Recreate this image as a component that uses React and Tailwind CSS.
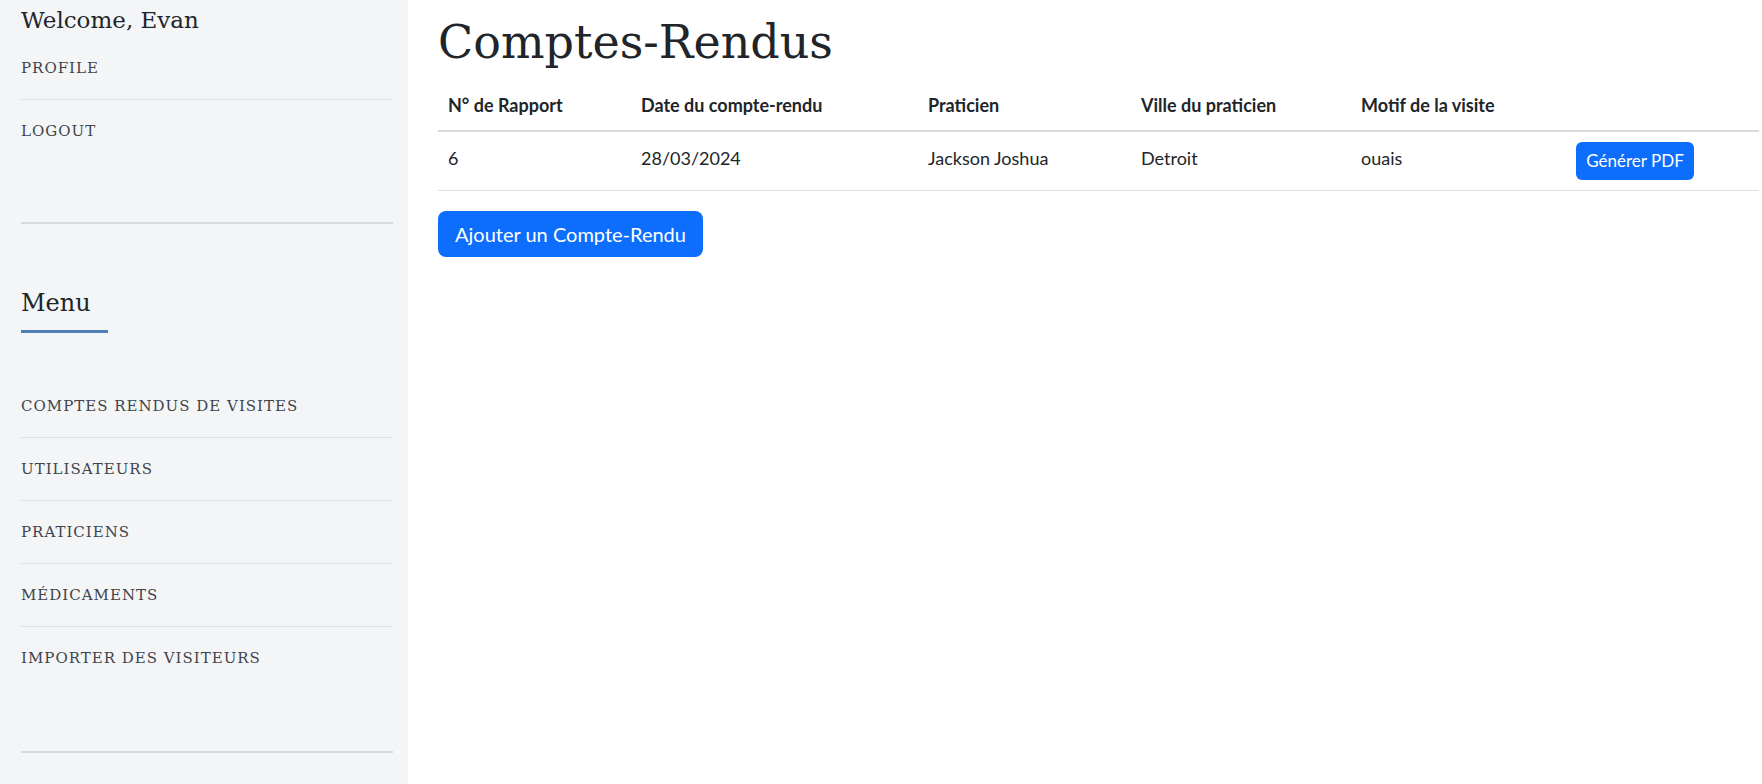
const sansFont = { fontFamily: 'Lato, "Open Sans", sans-serif' };

const topLinks = ['PROFILE'];

const menuLinks = [
  'COMPTES RENDUS DE VISITES',
  'UTILISATEURS',
  'PRATICIENS',
  'MÉDICAMENTS',
];

const rapports = [
  { id: 6, date: '28/03/2024', praticien: 'Jackson Joshua', ville: 'Detroit', motif: 'ouais' },
];

function SideLink({ label, last }) {
  return (
    <a
      href="#"
      className={`block py-[19px] text-[15px] leading-[24px] tracking-[1px] text-[#3f444b] ${last ? '' : 'border-b border-[#dfe0e3]'}`}
    >
      {label}
    </a>
  );
}

export default function App() {
  return (
    <div className="flex h-screen w-full overflow-hidden bg-white">
      {/* Sidebar */}
      <aside className="w-[408px] shrink-0 bg-[#f4f5f7] pl-[21px] pr-[15px] font-['DejaVu_Serif',serif]">
        <h2 className="pt-[6px] text-[23px] leading-[29px] text-[#212529]">Welcome, Evan</h2>
        <nav className="mt-[2px]">
          {topLinks.map((l) => (
            <SideLink key={l} label={l} />
          ))}
          <SideLink label="LOGOUT" last />
        </nav>
        <div className="mt-[60px] h-[2px] bg-[#d9dadd]" />

        <h3 className="mt-[65px] text-[24px] leading-[29px] text-[#212529]">Menu</h3>
        <div className="mt-[12px] h-[3px] w-[87px] bg-[#4f7db5]" />

        <nav className="mt-[42px]">
          {menuLinks.map((l) => (
            <SideLink key={l} label={l} />
          ))}
          <SideLink label="IMPORTER DES VISITEURS" last />
        </nav>
        <div className="mt-[62px] h-[2px] bg-[#d9dadd]" />
      </aside>

      {/* Main */}
      <main className="flex-1 pl-[30px] pr-[3px] pt-[15px]">
        <h1 className="font-['DejaVu_Serif',serif] text-[46px] leading-[55px] text-[#212529]">Comptes-Rendus</h1>

        <table className="mt-[13px] w-full border-collapse text-left text-[18px] text-[#212529]" style={sansFont}>
          <thead>
            <tr className="border-b-2 border-[#dadbdd]">
              <th className="w-[193px] px-[10px] pb-[11px] pt-[9px] font-bold leading-[27px]">N° de Rapport</th>
              <th className="w-[287px] px-[10px] pb-[11px] pt-[9px] font-bold leading-[27px]">Date du compte-rendu</th>
              <th className="w-[213px] px-[10px] pb-[11px] pt-[9px] font-bold leading-[27px]">Praticien</th>
              <th className="w-[220px] px-[10px] pb-[11px] pt-[9px] font-bold leading-[27px]">Ville du praticien</th>
              <th className="w-[217px] px-[10px] pb-[11px] pt-[9px] font-bold leading-[27px]">Motif de la visite</th>
              <th className="px-[8px]" />
            </tr>
          </thead>
          <tbody>
            {rapports.map((r) => (
              <tr key={r.id} className="border-b border-[#dfe0e2]">
                <td className="px-[10px] pt-[13px] align-top leading-[27px]">{r.id}</td>
                <td className="px-[10px] pt-[13px] align-top leading-[27px]">{r.date}</td>
                <td className="px-[10px] pt-[13px] align-top leading-[27px]">{r.praticien}</td>
                <td className="px-[10px] pt-[13px] align-top leading-[27px]">{r.ville}</td>
                <td className="px-[10px] pt-[13px] align-top leading-[27px]">{r.motif}</td>
                <td className="px-[8px] py-[10px]">
                  <button className="h-[38px] w-[118px] rounded-[6px] bg-[#0d6efd] text-[17px] text-white">
                    Générer PDF
                  </button>
                </td>
              </tr>
            ))}
          </tbody>
        </table>

        <button
          className="mt-[20px] h-[46px] w-[265px] rounded-[8px] bg-[#0d6efd] text-[20px] text-white"
          style={sansFont}
        >
          Ajouter un Compte-Rendu
        </button>
      </main>
    </div>
  );
}
